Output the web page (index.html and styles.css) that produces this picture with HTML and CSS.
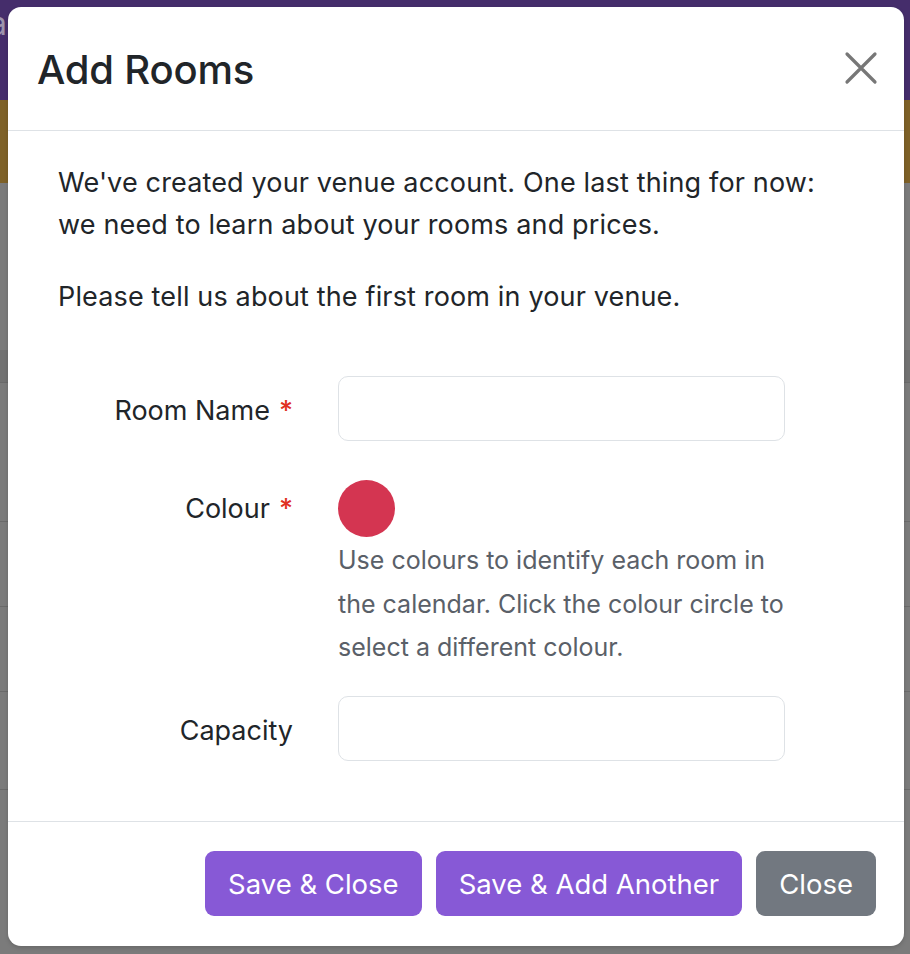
FILE: index.html
```html
<!DOCTYPE html>
<html lang="en">
<head>
<meta charset="utf-8">
<title>Add Rooms</title>
<link rel="stylesheet" href="styles.css">
</head>
<body>
<div class="page">
  <div class="navbar"><span class="brand">a</span></div>
  <div class="banner"></div>
  <div class="content">
    <div class="row row-head"></div>
    <div class="row r1"></div>
    <div class="row r2"></div>
    <div class="row r3"></div>
    <div class="row r4"></div>
    <div class="row r5"></div>
  </div>
</div>

<div class="modal">
  <div class="modal-header">
    <h1 class="modal-title">Add Rooms</h1>
    <button class="btn-close" aria-label="Close">
      <svg width="34" height="34" viewBox="0 0 34 34"><path d="M3 3 L31 31 M31 3 L3 31" stroke="#777" stroke-width="3.2" stroke-linecap="round" fill="none"/></svg>
    </button>
  </div>
  <div class="modal-body">
    <p class="intro">We've created your venue account. One last thing for now: we need to learn about your rooms and prices.</p>
    <p class="intro second">Please tell us about the first room in your venue.</p>
    <form class="form">
      <label class="label">Room Name <span class="req">*</span></label>
      <div class="field"><input class="input" type="text"></div>

      <label class="label label-colour">Colour <span class="req">*</span></label>
      <div class="field">
        <span class="swatch"></span>
        <p class="help">Use colours to identify each room in the calendar. Click the colour circle to select a different colour.</p>
      </div>

      <label class="label">Capacity</label>
      <div class="field"><input class="input" type="text"></div>
    </form>
  </div>
  <div class="modal-footer">
    <button class="btn btn-primary">Save &amp; Close</button>
    <button class="btn btn-primary">Save &amp; Add Another</button>
    <button class="btn btn-secondary">Close</button>
  </div>
</div>
</body>
</html>
```

FILE: styles.css
```css
* { box-sizing: border-box; }
html, body { margin: 0; padding: 0; }
body {
  width: 910px;
  height: 954px;
  overflow: hidden;
  font-family: Inter, "Noto Sans", "Liberation Sans", sans-serif;
  background: #7b7b7b;
  position: relative;
}

.page { display: flex; flex-direction: column; height: 954px; }
.navbar {
  height: 100px;
  background: #452d6b;
  padding-top: 4px;
  overflow: hidden;
}
.brand {
  display: inline-block;
  margin-left: -11px;
  font-size: 32px;
  color: #9c93ac;
}
.banner { height: 83px; background: #7e6128; }
.content { flex: 1; background: #7b7b7b; padding-top: 167px; }
.row { border-top: 1px solid #6a6a6a; }
.row-head { height: 32px; background: #727272; border-top: none; }
.r1 { height: 139px; }
.r2 { height: 85px; }
.r3 { height: 85px; }
.r4 { height: 98px; }
.r5 { height: 85px; }

.modal {
  position: absolute;
  left: 8px;
  top: 7px;
  width: 896px;
  height: 939px;
  background: #fff;
  border-radius: 13px;
  box-shadow: 0 2px 4px rgba(0,0,0,0.15);
  display: flex;
  flex-direction: column;
  color: #212529;
}
.modal-header {
  height: 124px;
  border-bottom: 1px solid #dee2e6;
  display: flex;
  align-items: center;
  justify-content: space-between;
  padding: 0 26px 0 29px;
}
.modal-title {
  margin: 2px 0 0;
  font-size: 40px;
  font-weight: 500;
  letter-spacing: -0.2px;
  color: #212529;
}
.btn-close {
  border: none;
  background: transparent;
  padding: 0;
  width: 34px;
  height: 34px;
  margin-top: -2px;
}
.modal-body {
  flex: 1;
  padding: 31px 50px 0 50px;
}
.intro {
  margin: 0;
  font-size: 27px;
  line-height: 42px;
  max-width: 775px;
  letter-spacing: 0.15px;
}
.intro.second { margin-top: 30px; }

.form {
  display: grid;
  grid-template-columns: 280px 447px;
  row-gap: 39px;
  margin-top: 58px;
}
.label {
  font-size: 27px;
  text-align: right;
  padding-right: 45px;
  padding-top: 4px;
  display: flex;
  align-items: center;
  justify-content: flex-end;
  gap: 9px;
  align-self: start;
  height: 65px;
}
.label-colour { height: 57px; padding-top: 0; }
.req { color: #e0321f; font-weight: 500; }
.field { display: flex; flex-direction: column; }
.input {
  height: 65px;
  border: 1px solid #dee2e6;
  border-radius: 10px;
  background: #fff;
  font-size: 26px;
  padding: 0 18px;
}
.swatch {
  width: 57px;
  height: 57px;
  border-radius: 50%;
  background: #d43551;
}
.help {
  margin: 2px 0 -13px;
  font-size: 25px;
  line-height: 43.5px;
  color: #5a6068;
}

.modal-footer {
  height: 125px;
  border-top: 1px solid #dee2e6;
  display: flex;
  justify-content: flex-end;
  align-items: flex-start;
  gap: 14px;
  padding: 29px 28px 0 0;
}
.btn {
  height: 65px;
  border: none;
  border-radius: 9px;
  color: #fff;
  font-family: inherit;
  font-size: 27.5px;
  padding: 0 23px;
}
.btn-primary { background: #8759d6; }
.btn-secondary { background: #727880; }
```
